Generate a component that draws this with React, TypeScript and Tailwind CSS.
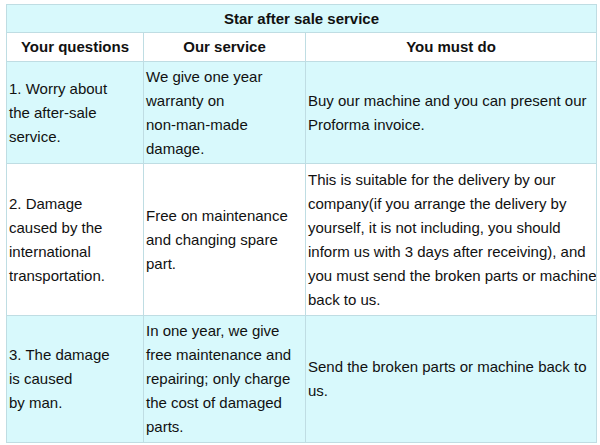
const cell = 'border border-[#bfdde3] px-[2px] py-0 align-middle whitespace-nowrap overflow-hidden'

export default function App() {
  return (
    <div className="w-[600px] h-[445px] bg-white pt-[4px] pl-[6px] font-['Liberation_Sans',Arial,sans-serif] text-[15px] leading-[24px] text-[#111]">
      <table className="border-collapse table-fixed w-[590px]">
        <colgroup>
          <col className="w-[137px]" />
          <col className="w-[162px]" />
          <col className="w-[291px]" />
        </colgroup>
        <tbody>
          {/* title */}
          <tr className="h-[28px] bg-[#d8f9fc]">
            <td colSpan={3} className="border border-[#bfdde3] text-center font-bold align-middle">
              Star after sale service
            </td>
          </tr>
          {/* header */}
          <tr className="h-[29px] bg-white font-bold">
            <td className="border border-[#bfdde3] text-center align-middle">Your questions</td>
            <td className="border border-[#bfdde3] text-center align-middle">Our service</td>
            <td className="border border-[#bfdde3] text-center align-middle">You must do</td>
          </tr>
          <tr className="h-[102px] bg-[#d8f9fc]">
            <td className={cell}>
              1. Worry about<br />the after-sale<br />service.
            </td>
            <td className={cell}>
              We give one year<br />warranty on<br />non-man-made<br />damage.
            </td>
            <td className={cell}>
              Buy our machine and you can present our<br />Proforma invoice.
            </td>
          </tr>
          <tr className="h-[152px] bg-white">
            <td className={cell}>
              2. Damage<br />caused by the<br />international<br />transportation.
            </td>
            <td className={cell}>
              Free on maintenance<br />and changing spare<br />part.
            </td>
            <td className={cell}>
              This is suitable for the delivery by our<br />
              company(if you arrange the delivery by<br />
              yourself, it is not including, you should<br />
              inform us with 3 days after receiving), and<br />
              you must send the broken parts or machine<br />
              back to us.
            </td>
          </tr>
          <tr className="h-[127px] bg-[#d8f9fc]">
            <td className={cell}>
              3. The damage<br />is caused<br />by man.
            </td>
            <td className={cell}>
              In one year, we give<br />free maintenance and<br />repairing; only charge<br />the cost of damaged<br />parts.
            </td>
            <td className={cell}>
              Send the broken parts or machine back to<br />us.
            </td>
          </tr>
        </tbody>
      </table>
    </div>
  )
}
